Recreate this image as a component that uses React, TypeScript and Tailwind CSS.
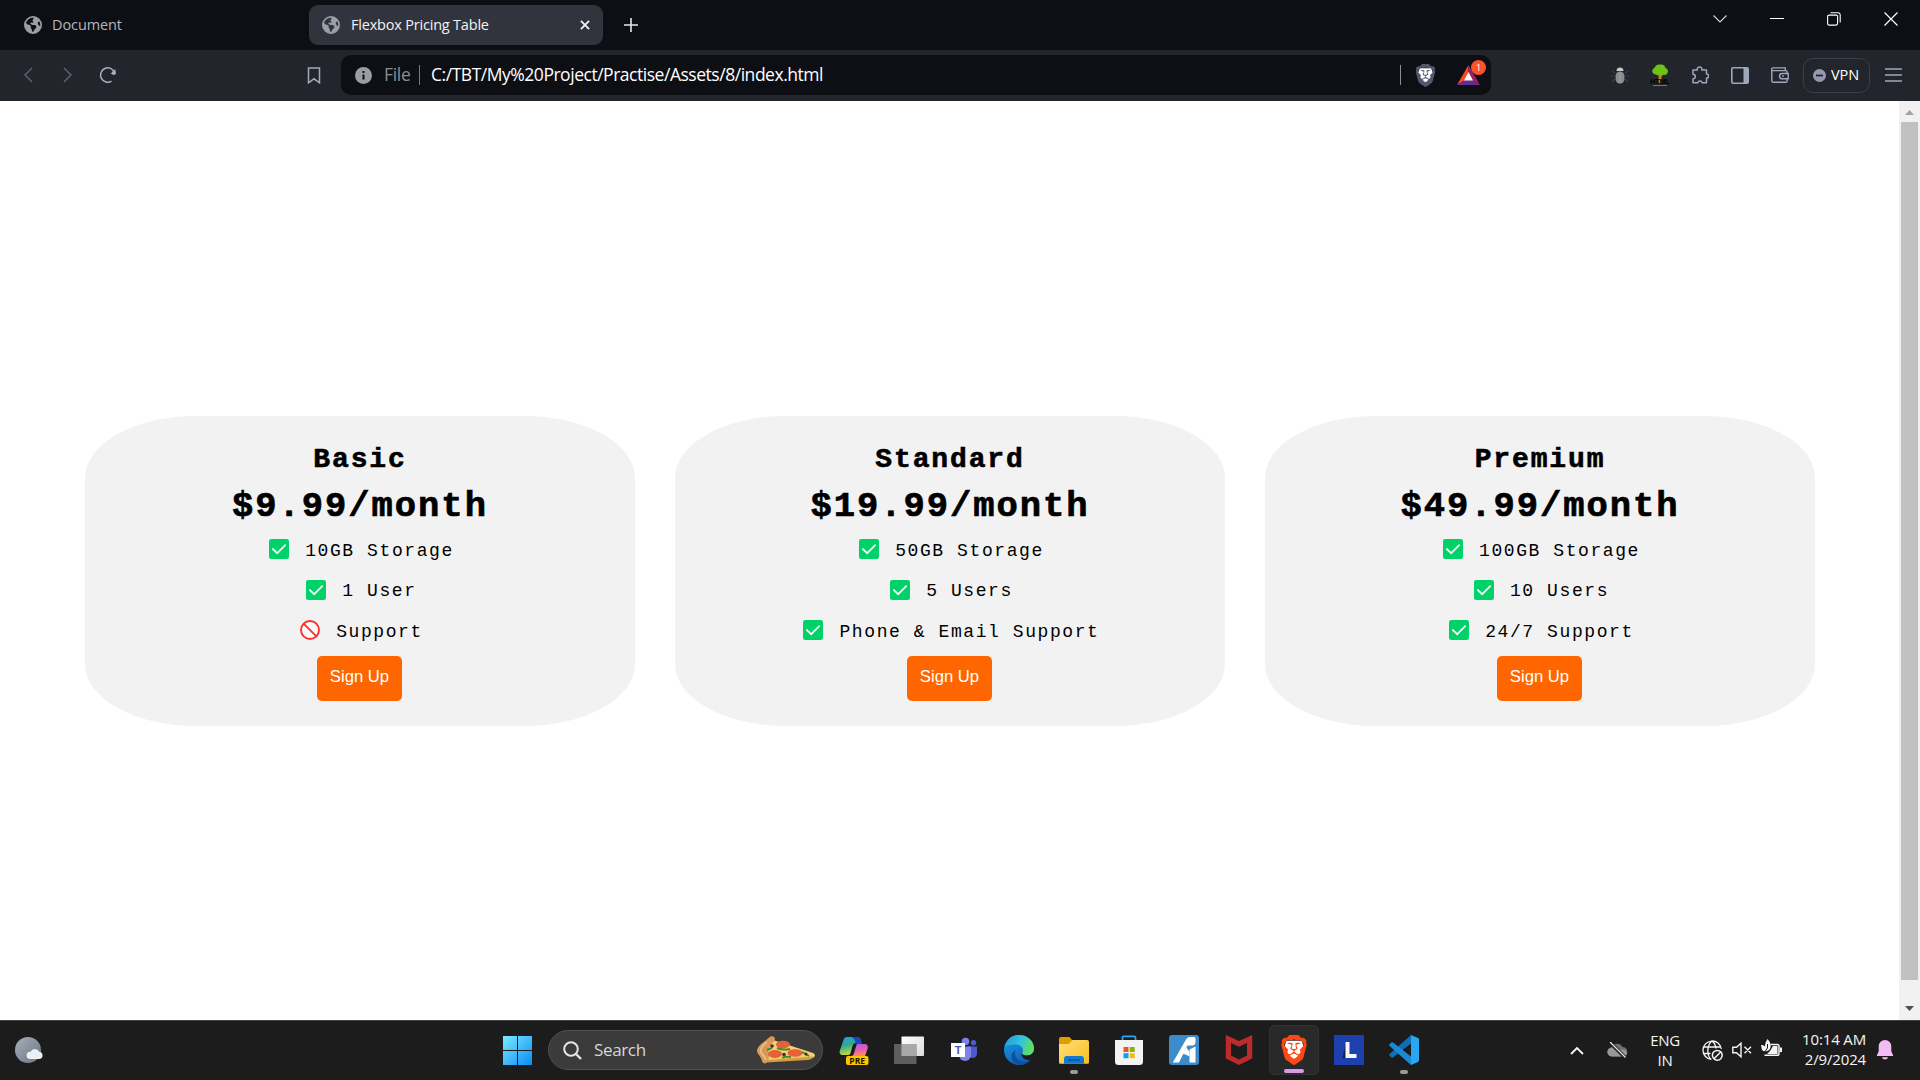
import type { ReactNode } from 'react';
import { FaEarthAmericas } from 'react-icons/fa6';
import { SiBrave } from 'react-icons/si';

const ui = "font-['Open_Sans','Noto_Sans',sans-serif]";

function Lion({ shield, className }: { shield: string; className: string }) {
  return (
    <span className={`relative block ${className}`}>
      <svg viewBox="0 0 24 24" className="absolute inset-0 size-full">
        <path d="M6 4.5h12l1.500 4-2.500 8.500-5 4.500-5-4.500L4.500 8.500z" fill="#fff" />
      </svg>
      <SiBrave className={`absolute inset-0 size-full ${shield}`} />
    </span>
  );
}

function TabStrip() {
  return (
    <div className="flex h-[50px] items-start bg-[#0e0f14]">
      <div className="flex h-[50px] w-[309px] items-center pl-6">
        <FaEarthAmericas className="size-[18px] text-[#9b9fa6]" />
        <span className="ml-[10px] text-[14.5px] tracking-[-0.1px] text-[#b4b6ba]">Document</span>
      </div>
      <div className="mt-[5px] flex h-10 w-[294px] items-center rounded-[9px] bg-[#31343d] pl-[13px]">
        <FaEarthAmericas className="size-[18px] text-[#9b9fa6]" />
        <span className="ml-[11px] whitespace-nowrap text-[14.5px] tracking-[-0.2px] text-[#f2f3f5]">Flexbox Pricing Table</span>
        <svg className="mr-[13px] ml-auto size-[10px]" viewBox="0 0 11 11" stroke="#f2f3f5" strokeWidth="2">
          <path d="M1 1l9 9M10 1l-9 9" />
        </svg>
      </div>
      <svg className="mt-[18px] ml-[21px] size-[14px]" viewBox="0 0 14 14" stroke="#e4e6ea" strokeWidth="1.600">
        <path d="M7 0v14M0 7h14" />
      </svg>
      <svg className="mt-[12px] ml-auto h-[13px] w-[14px]" viewBox="0 0 14 13" fill="none" stroke="#d0d1d3" strokeWidth="1.200">
        <path d="M.5 3.500L7 10l6.500-6.500" />
      </svg>
      <svg className="mt-[12px] ml-[43px] h-[13px] w-[14px]" viewBox="0 0 14 13" stroke="#fff">
        <path d="M0 6.500h14" />
      </svg>
      <svg className="mt-[12px] ml-[43px] size-[14px]" viewBox="0 0 14 14" fill="none" stroke="#fff" strokeWidth="1.100">
        <rect x=".6" y="3.100" width="10" height="10" rx="1.500" />
        <path d="M3.500.7H11a2.200 2.200 0 0 1 2.200 2.200v7.500" />
      </svg>
      <svg className="mt-[12px] mr-[22px] ml-[43px] size-[14px]" viewBox="0 0 14 14" stroke="#fff" strokeWidth="1.200">
        <path d="M.5.5l13 13M13.500.5l-13 13" />
      </svg>
    </div>
  );
}

function Toolbar() {
  return (
    <div className="flex h-[51px] items-center bg-[#22252c] pb-px pl-6">
      <svg className="h-4 w-[9px]" viewBox="0 0 9 16" fill="none" stroke="#5c616b" strokeWidth="1.500">
        <path d="M8 1L1 8l7 7" />
      </svg>
      <svg className="ml-[30px] h-4 w-[9px]" viewBox="0 0 9 16" fill="none" stroke="#5c616b" strokeWidth="1.500">
        <path d="M1 1l7 7-7 7" />
      </svg>
      <svg className="ml-[27px] size-[18px]" viewBox="0 0 18 18" fill="none" stroke="#a9afbb" strokeWidth="1.500">
        <path d="M12.500 15.200A7.200 7.200 0 1 1 15.500 6.500" />
        <path d="M16.500 3v5h-5z" fill="#a9afbb" stroke="none" />
        <circle cx="14.800" cy="7" r="2" fill="#a9afbb" stroke="none" />
      </svg>
      <svg className="ml-[190px] h-[17px] w-[14px]" viewBox="0 0 14 17" fill="none" stroke="#a2a9b8" strokeWidth="1.500">
        <path d="M1.500 1h11v14.800L7 11.800l-5.500 4z" />
      </svg>
      <div className="ml-5 flex h-10 w-[1150px] items-center rounded-[10px] bg-[#0e0f14] pl-[14px]">
        <svg className="size-[17px]" viewBox="0 0 17 17">
          <circle cx="8.500" cy="8.500" r="8.500" fill="#9a9da3" />
          <path d="M8.500 7.500v5M8.500 4v2" stroke="#0e0f14" strokeWidth="2" />
        </svg>
        <span className="ml-3 w-[27px] pb-px text-[17.5px] tracking-[-0.3px] text-[#8b8e94]">File</span>
        <span className="ml-2 h-5 w-px bg-[#777a80]" />
        <span className="ml-[11px] pb-px whitespace-nowrap text-[17.5px] tracking-[-0.47px] text-white">
          C:/TBT/My%20Project/Practise/Assets/8/index.html
        </span>
        <span className="ml-auto h-5 w-px bg-[#8b8e94]" />
        <Lion className="ml-[13px] size-[23px]" shield="text-[#54566b]" />
        <div className="relative mr-[11px] ml-[20px] h-5 w-[23px]">
          <svg viewBox="0 0 23 20" className="size-full">
            <path d="M11.500 0L0 20l11.500-7z" fill="#ff4a1f" />
            <path d="M11.500 0L23 20l-11.500-7z" fill="#9e1f63" />
            <path d="M0 20h23l-11.500-7z" fill="#662d91" />
            <path d="M11.500 7l4.500 8.500H7z" fill="#fff" />
          </svg>
          <span className="absolute -top-[5px] left-[14px] flex size-[15px] items-center justify-center rounded-full bg-[#fb542b] text-[9px] text-white">
            1
          </span>
        </div>
      </div>
      <svg className="ml-[120px] h-[18px] w-[18px]" viewBox="0 0 18 18">
        <path d="M1 5l3 2M17 5l-3 2M0 10h4M18 10h-4M1 16l3-3M17 16l-3-3" stroke="#3d3f44" strokeWidth="1.200" />
        <path d="M5.500 5a3.500 3.500 0 0 1 7 0z" fill="#c9c9c9" />
        <rect x="4.600" y="5.500" width="8.800" height="12" rx="4.300" fill="#8c8c8c" />
        <path d="M9 6v11.500" stroke="#9d9d9d" />
      </svg>
      <svg className="ml-[20px] h-[22px] w-[22px]" viewBox="0 0 22 22">
        <path d="M11 9v10" stroke="#c98a14" strokeWidth="2.800" />
        <path d="M11 13l4-4M11 12L8 9" stroke="#c98a14" strokeWidth="1.300" />
        <path d="M3.500 8a3 3 0 0 1 2-4A4.500 4.500 0 0 1 11 .6a5 5 0 0 1 5.500 3.400 3.400 3.400 0 0 1 2 5c-.6 2-3 2.500-4.500 1.500-1.500 1-3 .5-3-.5-1 1.500-3 1.500-4 .5-2 0-3-1-3.500-2.500z" fill="#6cc316" />
        <path d="M4 21.500h14" stroke="#8a8d92" strokeWidth=".8" />
        <text x="11" y="20.200" textAnchor="middle" fontSize="7" fontWeight="bold" fill="#000" fontFamily="Liberation Sans, sans-serif">HTML</text>
      </svg>
      <svg className="ml-[20px] size-[18px]" viewBox="0 0 18 18" fill="none" stroke="#9fa8ba" strokeWidth="1.500" strokeLinejoin="round">
        <path d="M2 4h4.300a2.400 2.400 0 1 1 4.600 0H15.500v4a2.100 2.100 0 0 1 0 4.200v4.600H11.200a2.300 2.300 0 0 0-4.500 0H2v-4a2.300 2.300 0 0 0 0-4.600z" />
      </svg>
      <svg className="ml-[22px] h-[17px] w-[18px]" viewBox="0 0 18 17" fill="none" stroke="#9fa8ba" strokeWidth="1.600">
        <rect x=".8" y=".8" width="16.400" height="15.400" rx="1.200" />
        <path d="M12.500 1h4.500v15h-4.500z" fill="#9fa8ba" stroke="none" />
      </svg>
      <svg className="ml-[22px] h-[16px] w-[18px]" viewBox="0 0 18 16" fill="none" stroke="#9fa8ba" strokeWidth="1.400">
        <path d="M16 6V4.600a1 1 0 0 0-1-1H2A1.300 1.300 0 0 1 2 .9h12.300v2.500M.8 2.500V13.800a1.400 1.400 0 0 0 1.400 1.400h12.600a1.300 1.300 0 0 0 1.300-1.300V12" />
        <path d="M17.200 6.500h-6a2.600 2.600 0 0 0 0 5.300h6zM11 9.100h2" />
      </svg>
      <div className="ml-[14px] flex h-[35px] w-[67px] items-center rounded-[10px] border border-[#3b3f49] pl-[9px]">
        <svg className="size-[13px]" viewBox="0 0 13 13">
          <circle cx="6.500" cy="6.500" r="6.500" fill="#9497b0" />
          <path d="M3 6.500h7" stroke="#22252c" strokeWidth="1.800" />
        </svg>
        <span className="ml-[5px] text-[14.5px] tracking-[-0.1px] text-white">VPN</span>
      </div>
      <svg className="ml-[15px] h-[14px] w-[17px]" viewBox="0 0 17 14" stroke="#9fa8ba" strokeWidth="1.500">
        <path d="M0 1h17M0 7h17M0 13h17" />
      </svg>
    </div>
  );
}

function Check() {
  return (
    <svg viewBox="0 0 20 20" className="mr-4 size-5 shrink-0">
      <rect width="20" height="20" rx="2.300" fill="#00d26a" />
      <path d="M3.800 10l4.400 4.200 8-8" fill="none" stroke="#f4f4f4" strokeWidth="1.800" strokeLinecap="round" />
    </svg>
  );
}

function Prohibited() {
  return (
    <svg viewBox="0 0 20 20" className="mr-4 size-5 shrink-0">
      <circle cx="10" cy="10" r="9" fill="#f8f8f8" stroke="#fb3030" strokeWidth="1.900" />
      <path d="M3.800 3.800l12.400 12.400" stroke="#fb3030" strokeWidth="1.900" />
    </svg>
  );
}

type Plan = { name: string; price: string; features: { text: string; included: boolean }[] };

const plans: Plan[] = [
  {
    name: 'Basic',
    price: '$9.99/month',
    features: [
      { text: '10GB Storage', included: true },
      { text: '1 User', included: true },
      { text: 'Support', included: false },
    ],
  },
  {
    name: 'Standard',
    price: '$19.99/month',
    features: [
      { text: '50GB Storage', included: true },
      { text: '5 Users', included: true },
      { text: 'Phone & Email Support', included: true },
    ],
  },
  {
    name: 'Premium',
    price: '$49.99/month',
    features: [
      { text: '100GB Storage', included: true },
      { text: '10 Users', included: true },
      { text: '24/7 Support', included: true },
    ],
  },
];

function PlanCard({ plan }: { plan: Plan }) {
  return (
    <div className="flex h-[310px] w-[550px] flex-col items-center rounded-[20%] bg-[#f2f2f2] pt-[24px] font-['Liberation_Mono',monospace] text-black">
      <h2 className="h-[40px] text-[28px] leading-[40px] font-bold tracking-[1.86px] [-webkit-text-stroke:0.6px_black]">
        {plan.name}
      </h2>
      <p className="mt-[4px] h-[47px] text-[35.5px] leading-[46px] font-bold tracking-[1.95px] [-webkit-text-stroke:0.7px_black]">
        {plan.price}
      </p>
      <ul className="-mt-[2px] pl-[3px]">
        {plan.features.map((f) => (
          <li key={f.text} className="flex h-[40.500px] items-center justify-center text-[18px] tracking-[1.58px]">
            {f.included ? <Check /> : <Prohibited />}
            <span className="pt-[3px] leading-6 whitespace-nowrap">{f.text}</span>
          </li>
        ))}
      </ul>
      <button className="mt-[5px] mr-px h-[45px] w-[85px] rounded-[5px] bg-[#ff6600] pb-px font-['Liberation_Sans',Arial,sans-serif] text-[16.67px] leading-none text-white">
        Sign Up
      </button>
    </div>
  );
}

function Page() {
  return (
    <div className="flex h-[919px] bg-white">
      <main className="flex flex-1 items-start gap-10 pt-[315px] pl-[85px]">
        {plans.map((p) => (
          <PlanCard key={p.name} plan={p} />
        ))}
      </main>
      <div className="flex w-[21px] flex-col items-center bg-[#f1f1f1]">
        <svg className="mt-[9px] h-[5px] w-[9px]" viewBox="0 0 9 5">
          <path d="M4.500 0L9 5H0z" fill="#a3a3a3" />
        </svg>
        <div className="mt-[7px] h-[858px] w-[17px] bg-[#c1c1c1]" />
        <svg className="mt-[26px] h-[5px] w-[9px]" viewBox="0 0 9 5">
          <path d="M0 0h9L4.500 5z" fill="#505050" />
        </svg>
      </div>
    </div>
  );
}

function Pizza() {
  return (
    <svg viewBox="0 0 60 28" className="h-7 w-[60px]">
      <path d="M14 3L57 17c2.500 1 2.500 4-.5 5L10 26z" fill="#f6cf74" />
      <path d="M10 24l48-3.500c-1 2-3 3-6 3.500l-42 2.500z" fill="#d99b3f" />
      <path d="M13 1.500c2-2 6-1.500 6 1.500-1 4-5 5-6 9s1 8-1 13c-1 3-5 3.500-6 0-1-5-5-7-5-10C1 9 10 5 13 1.500z" fill="#d9975a" />
      <path d="M11 6c-4 3-7 7-6 10 1 3 4 4 5 8" stroke="#edbc80" strokeWidth="2" fill="none" />
      <ellipse cx="27" cy="8.500" rx="7" ry="3.800" fill="#e8603a" />
      <ellipse cx="19" cy="18" rx="7" ry="4" fill="#e8603a" />
      <ellipse cx="39" cy="17" rx="7.500" ry="3.800" fill="#e8603a" />
      <path d="M21 12c4 2 8 2 13 1M26 22c3-2 6-1 9-1M46 16l7 4M11 14l5-2" stroke="#3f8f2a" strokeWidth="2" fill="none" />
      <circle cx="16" cy="10" r="1.800" fill="#3d2b4a" />
      <circle cx="28" cy="18.500" r="1.800" fill="#3d2b4a" />
      <circle cx="50" cy="18" r="1.500" fill="#3d2b4a" />
    </svg>
  );
}

function AppSlot({ children, mark = '', active = false }: { children: ReactNode; mark?: string; active?: boolean }) {
  return (
    <div className="flex w-[55px] justify-center">
      <div
        className={`relative flex size-[50px] items-center justify-center rounded-[5px] ${
          active ? 'border border-[#323232] bg-[#292929]' : ''
        }`}
      >
        {children}
        {mark && <span className={`absolute bottom-px left-1/2 h-1 -translate-x-1/2 rounded-full ${mark}`} />}
      </div>
    </div>
  );
}

function TaskbarApps() {
  return (
    <div className="flex">
      <AppSlot>
        <svg viewBox="0 0 30 30" className="size-[30px] overflow-visible">
          <defs>
            <linearGradient id="cpA" x1="0" y1="0" x2=".3" y2="1">
              <stop offset="0" stopColor="#2a9df4" />
              <stop offset=".5" stopColor="#2fa98c" />
              <stop offset="1" stopColor="#c8d93a" />
            </linearGradient>
            <linearGradient id="cpB" x1="0" y1="0" x2=".2" y2="1">
              <stop offset="0" stopColor="#a45be8" />
              <stop offset=".6" stopColor="#e85fb0" />
              <stop offset="1" stopColor="#ff8a5c" />
            </linearGradient>
          </defs>
          <path d="M8 2h10c3 0 3.500 2 4.500 6H17c-2 0-3 1-3.500 3l-2 7c-.5 1.500-1 2-3 2H4c-3 0-4-2-3-5L4.500 5C5.300 3 6 2 8 2z" fill="url(#cpA)" />
          <path d="M13 2h5c3 0 3.500 2 4.500 7H17c-1-4-2-5-4-7z" fill="#1747c4" />
          <path d="M19 9h6c3.500 0 4.500 2 3.500 5L26 21H12c2 0 2.500-1 3-3l2-6.500C17.500 9.500 18 9 19 9z" fill="url(#cpB)" />
          <rect x="7" y="21" width="22.500" height="9" rx="2" fill="#ffc400" />
          <text x="18.200" y="28.600" textAnchor="middle" fontSize="8.500" fontWeight="bold" fill="#1a1400" fontFamily="Open Sans, sans-serif">PRE</text>
        </svg>
      </AppSlot>
      <AppSlot>
        <svg viewBox="0 0 30 30" className="size-[30px]">
          <defs>
            <linearGradient id="tv" x1="0" y1="0" x2="1" y2="1">
              <stop offset="0" stopColor="#fff" />
              <stop offset="1" stopColor="#dcdcdc" />
            </linearGradient>
          </defs>
          <rect x="7.500" y="1.500" width="22.500" height="19.500" rx=".8" fill="url(#tv)" />
          <rect x="0" y="9" width="22.500" height="20" rx=".8" fill="#6a6a6a" fillOpacity=".85" />
          <path d="M7.500 9h15v12h-15z" fill="#a9a9a9" />
        </svg>
      </AppSlot>
      <AppSlot>
        <svg viewBox="0 0 30 30" className="size-[30px]">
          <circle cx="16.500" cy="6.500" r="3.800" fill="#7b83eb" />
          <circle cx="24.500" cy="7.800" r="2.700" fill="#5059c9" />
          <path d="M19 11.500h9v7a4.500 4.500 0 0 1-9 0z" fill="#5059c9" />
          <path d="M10 11.500h12v8.500a6 6 0 0 1-12 0z" fill="#7b83eb" />
          <rect x="2" y="8" width="14" height="14" fill="#fff" />
          <text x="9" y="19" textAnchor="middle" fontSize="11" fontWeight="bold" fill="#4b53bc" fontFamily="Liberation Sans, sans-serif">T</text>
        </svg>
      </AppSlot>
      <AppSlot>
        <svg viewBox="0 0 30 30" className="size-[30px]">
          <defs>
            <linearGradient id="edT" x1="0" y1=".2" x2="1" y2=".5">
              <stop offset="0" stopColor="#1f9de0" />
              <stop offset=".55" stopColor="#35c4d8" />
              <stop offset="1" stopColor="#62e05a" />
            </linearGradient>
            <linearGradient id="edB" x1="0" y1="0" x2=".5" y2="1">
              <stop offset="0" stopColor="#1ba0e4" />
              <stop offset="1" stopColor="#0c62c0" />
            </linearGradient>
          </defs>
          <circle cx="15" cy="15" r="15" fill="url(#edB)" />
          <path d="M.5 12C2 4.500 8 0 15 0c9 0 15 6.500 15 13 0 5-3.500 7.500-7.500 7.500-3 0-4.500-1-4.500-2.200 0-.8 1-1.300 1-3.300 0-3-3-5.500-7-5.500C6 9.500 2 11 .5 12z" fill="url(#edT)" />
          <path d="M11.500 15c-2 5 1.500 11.500 8.500 11.500 3 0 5-.8 6.500-1.800C24 28 20 30 15.500 30 10 29.500 7 25 7.500 21c.3-3 2-5 4-6z" fill="#124f9e" />
          <path d="M18.800 16.500c-.5 1-.8 1.300-.8 1.800 0 1.200 1.500 2.200 4.500 2.200 3.500 0 5.500-1 7-3.500l1 1-1.200 5.500-1.200 1c-4.500 1.200-9 .2-10.800-4.600z" fill="#1c1c1c" />
        </svg>
      </AppSlot>
      <AppSlot mark="w-2 bg-[#9a9a9a]">
        <svg viewBox="0 0 30 30" className="size-[30px]">
          <defs>
            <linearGradient id="fo" x1="0" y1="0" x2="1" y2="1">
              <stop offset="0" stopColor="#ffe07a" />
              <stop offset="1" stopColor="#fbbd1e" />
            </linearGradient>
          </defs>
          <path d="M0 4a2 2 0 0 1 2-2h8.500l3 3.500L11 9H0z" fill="#e09d00" />
          <path d="M0 9h9.500l4-4H28a2 2 0 0 1 2 2v20.500a1.200 1.200 0 0 1-1.200 1.200H1.200A1.200 1.200 0 0 1 0 27.500z" fill="url(#fo)" />
          <path d="M5 28.700V24a3 3 0 0 1 3-3h14a3 3 0 0 1 3 3v4.700z" fill="#0f78d0" />
          <path d="M9 25h12" stroke="#0a4a8c" strokeWidth="1.300" />
        </svg>
      </AppSlot>
      <AppSlot>
        <svg viewBox="0 0 30 30" className="size-[30px]">
          <path d="M8.500 6V2.500A1.200 1.200 0 0 1 9.700 1.300h10.600a1.200 1.200 0 0 1 1.200 1.200V6" fill="none" stroke="#22a7ef" strokeWidth="1.800" />
          <path d="M1 5h28v21.500a3.500 3.500 0 0 1-3.500 3.500h-21A3.500 3.500 0 0 1 1 26.500z" fill="#f3f3f3" />
          <path d="M9.500 12h5v5h-5z" fill="#f25022" />
          <path d="M15.700 12h5v5h-5z" fill="#7fba00" />
          <path d="M9.500 18.200h5v5h-5z" fill="#00a4ef" />
          <path d="M15.700 18.200h5v5h-5z" fill="#ffb900" />
        </svg>
      </AppSlot>
      <AppSlot>
        <svg viewBox="0 0 30 30" className="size-[30px]">
          <rect width="30" height="30" rx="3" fill="#3c8ccb" />
          <path d="M17 4.500a4.200 4.200 0 0 1 4-2.500h4a1.500 1.500 0 0 1 1.500 1.500V7a3.500 3.500 0 0 1-3.500 3.500h-4.500L10 27.500H3.800z" fill="#fff" />
          <path d="M20.500 14.500l6-3V27.500h-6z" fill="#fff" />
          <path d="M13.500 18.500l4-6 3 4.500v4.500l-3-1.500z" fill="#fff" />
        </svg>
      </AppSlot>
      <AppSlot>
        <svg viewBox="0 0 30 30" className="size-[30px]">
          <path d="M1.800 0L15 6l13.200-6v23.500L15 30 1.800 23.500zM7 8v12.500l8 4 8-4V8l-8 3.800z" fill="#bd2a2c" fillRule="evenodd" />
        </svg>
      </AppSlot>
      <AppSlot active mark="w-5 bg-[#d99be6]">
        <Lion className="size-[30px]" shield="text-[#ff4714]" />
      </AppSlot>
      <AppSlot>
        <svg viewBox="0 0 30 30" className="size-[30px]">
          <path d="M0 0h30v30H0z" fill="#1e3fae" />
          <path d="M12 7L8.500 23h3z" fill="#0f2440" />
          <path d="M11.500 7h4v12h7v4h-11z" fill="#f4f6fa" />
        </svg>
      </AppSlot>
      <AppSlot mark="w-2 bg-[#9a9a9a]">
        <svg viewBox="0 0 30 30" className="size-[30px]">
          <path d="M22 0l7 3a1.800 1.800 0 0 1 1 1.700v20.600A1.800 1.800 0 0 1 29 27l-7 3z" fill="#27a7f2" />
          <path d="M22 0v8.500L4 22.500a1.300 1.300 0 0 1-1.600 0L.6 20.800a1.200 1.200 0 0 1 0-1.700z" fill="#0d6fb5" />
          <path d="M22 30v-8.500L4 7.500a1.300 1.300 0 0 0-1.600 0L.6 9.200a1.200 1.200 0 0 0 0 1.700z" fill="#1a8ad6" />
        </svg>
      </AppSlot>
    </div>
  );
}

function Tray() {
  return (
    <div className="ml-auto flex items-center text-[#f5f5f5]">
      <svg className="h-[9px] w-[14px]" viewBox="0 0 14 9" fill="none" stroke="#f5f5f5" strokeWidth="1.800">
        <path d="M1 8l6-6 6 6" />
      </svg>
      <svg className="ml-[23px] h-4 w-[21px]" viewBox="0 0 21 16">
        <path d="M5 14.500a4.500 4.500 0 0 1-.5-9A6 6 0 0 1 15.500 5a4.800 4.800 0 0 1 1 9.500z" fill="#6d6d6d" />
        <path d="M5 14.500a4.500 4.500 0 0 1-2-8.500c3-1 5 0 8 2.500 3-1.500 6-1 8 0 2 3 .5 6-2.500 6z" fill="#989898" />
        <path d="M2.500 0l16 16" stroke="#1c1c1c" strokeWidth="3.500" />
        <path d="M3 0l15.500 15.500" stroke="#e8e8e8" strokeWidth="1.300" />
      </svg>
      <div className="-mt-px ml-[20px] w-[34px] text-center text-[15px] leading-5 tracking-[-0.3px]">
        ENG
        <br />
        IN
      </div>
      <svg className="ml-5 size-[21px]" viewBox="0 0 21 21" fill="none" stroke="#f5f5f5" strokeWidth="1.300">
        <path d="M9.500 19.400A9.200 9.200 0 1 1 19.300 9M1.500 7h17.500M1.500 13.500h7M8.500 19C4.500 14 5 5 10 1M10 1c2.500 2 3.800 5 3.900 7.500" />
        <circle cx="15.300" cy="15.300" r="4.900" strokeWidth="1.500" />
        <path d="M12 18.800l6.700-6.800" strokeWidth="1.500" />
      </svg>
      <svg className="ml-[9px] h-[16px] w-5" viewBox="0 0 20 16" fill="none" stroke="#f5f5f5" strokeWidth="1.400">
        <path d="M.8 5.200h3.700L9 1.200v13.600l-4.500-4H.8zM12.500 4.800l6.500 6.500M19 4.800l-6.500 6.500" />
      </svg>
      <svg className="-mt-[4px] ml-[9px] h-[18px] w-[21px]" viewBox="0 0 21 18">
        <path d="M10 5.500h6.500A1.800 1.800 0 0 1 18 7.300v7.200a1.800 1.800 0 0 1-1.800 1.800H3.500" fill="none" stroke="#f5f5f5" strokeWidth="1.500" />
        <path d="M19 8.500h2v4.500h-2z" fill="#f5f5f5" />
        <path d="M9 12l3-5h4.500v8H6z" fill="#f5f5f5" />
        <path d="M6.500 0c3 3 4.500 7 2 10.500-2 2.500-6 2-7.500.5L0 6c2 0 3 .5 4 1.500C4 5 5 2 6.500 0z" fill="#f5f5f5" />
        <path d="M6.500 5v4L2 15.500" stroke="#1c1c1c" fill="none" />
      </svg>
      <div className="-mt-[2px] ml-[14px] w-[70px] text-right text-[15px] leading-5 tracking-[-0.15px] whitespace-nowrap">
        10:14 AM
        <br />
        2/9/2024
      </div>
      <svg className="mr-[27px] ml-[11px] h-5 w-4" viewBox="0 0 16 20">
        <path d="M8 0a6.300 6.300 0 0 1 6.300 6.300v5L16 15v1H0v-1l1.700-3.700v-5A6.300 6.300 0 0 1 8 0zM5 17.300h6c-.5 3-5.500 3-6 0z" fill="#f0bcf2" />
      </svg>
    </div>
  );
}

function Taskbar() {
  return (
    <div className="flex h-[60px] items-center border-t border-[#404040] bg-[#1c1c1c] pb-px">
      <svg className="ml-[15px] h-[27px] w-[29px]" viewBox="0 0 29 27">
        <defs>
          <linearGradient id="moon" x1="0" y1="0" x2="1" y2="1">
            <stop offset="0" stopColor="#a5b0bd" />
            <stop offset="1" stopColor="#6a747f" />
          </linearGradient>
        </defs>
        <circle cx="13" cy="13" r="13" fill="url(#moon)" />
        <path d="M15 22a3.600 3.600 0 0 1 .5-7.200 4.800 4.800 0 0 1 8.700 0A3.700 3.700 0 0 1 25 22z" fill="#eceff3" />
      </svg>
      <svg className="ml-[459px] size-[29px]" viewBox="0 0 29 29">
        <defs>
          <linearGradient id="win" gradientUnits="userSpaceOnUse" x1="0" y1="0" x2="29" y2="29">
            <stop offset="0" stopColor="#7beaff" />
            <stop offset="1" stopColor="#0a8cf5" />
          </linearGradient>
        </defs>
        <path d="M0 0h14v14H0zM15 0h14v14H15zM0 15h14v14H0zM15 15h14v14H15z" fill="url(#win)" />
      </svg>
      <div className="ml-4 flex h-10 w-[275px] items-center rounded-full border border-[#505050] bg-[#3b3b3b] pl-[14px]">
        <svg className="size-[19px]" viewBox="0 0 19 19" fill="none" stroke="#e6e6e6" strokeWidth="2">
          <circle cx="8" cy="8" r="6.800" />
          <path d="M13 13l5 5" strokeWidth="2.400" />
        </svg>
        <span className="ml-3 text-[17px] tracking-[-0.35px] text-[#d6d6d6]">Search</span>
        <span className="mr-[6px] ml-auto">
          <Pizza />
        </span>
      </div>
      <div className="ml-[3.500px]">
        <TaskbarApps />
      </div>
      <Tray />
    </div>
  );
}

export default function App() {
  return (
    <div className={`flex h-[1080px] w-[1920px] flex-col overflow-hidden ${ui}`}>
      <TabStrip />
      <Toolbar />
      <Page />
      <Taskbar />
    </div>
  );
}
